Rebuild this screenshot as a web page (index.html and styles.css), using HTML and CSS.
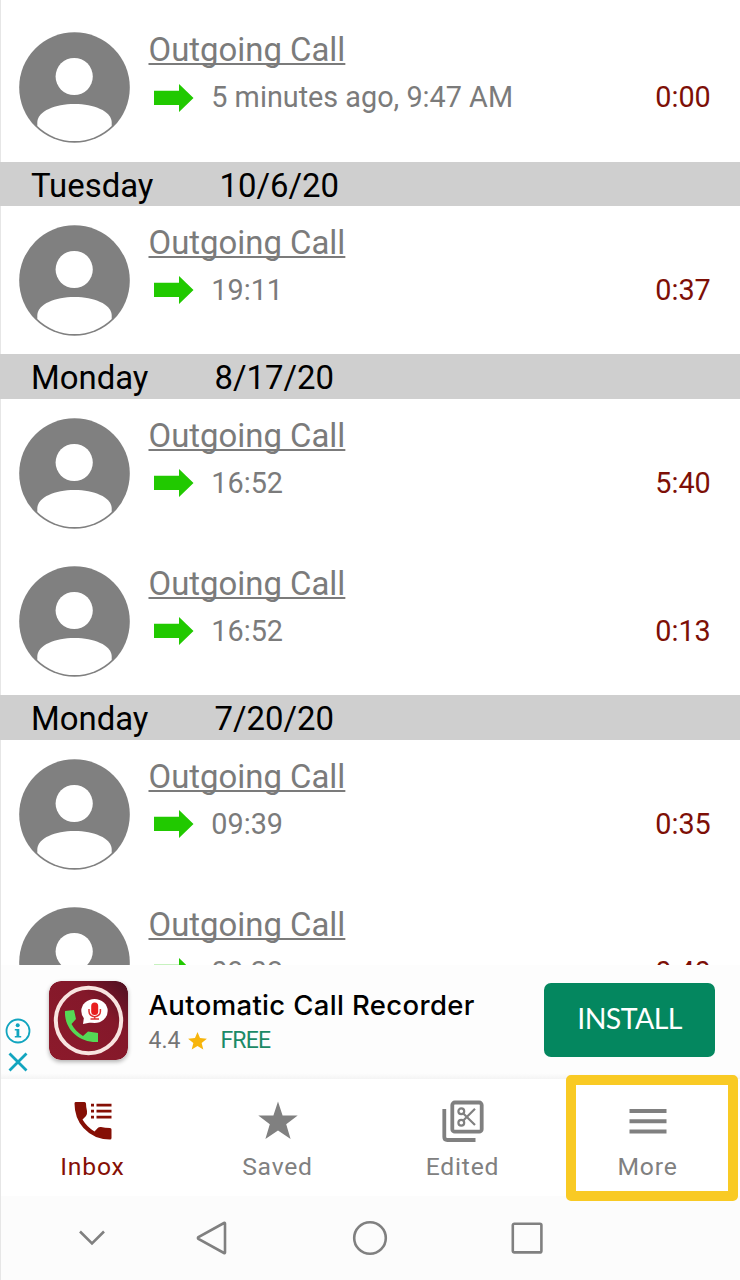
FILE: index.html
```html
<!DOCTYPE html>
<html lang="en">
<head>
    <meta charset="UTF-8">
    <meta name="viewport" content="width=device-width, initial-scale=1.0">
    <title>Call Recorder - Inbox</title>
    <link rel="stylesheet" href="styles.css">
</head>
<body>

<!-- Shared icons -->
<svg class="icon-defs" width="0" height="0">
    <symbol id="avatar" viewBox="0 0 111 111">
        <circle cx="55.5" cy="55.5" r="55.3" fill="#808080"/>
        <circle cx="55.2" cy="44.5" r="18.6" fill="#fff"/>
        <path d="M18.3 90C19 79 36 72 55.5 72S92 79 92.7 90V94A53.5 53.5 0 0 1 18.3 94Z" fill="#fff"/>
    </symbol>
    <symbol id="arrow" viewBox="0 0 40 28">
        <path d="M0 6.7H25V0L39.5 14L25 28V21H0Z" fill="#21c900"/>
    </symbol>
</svg>

<div class="screen">
    <div class="call-list">
        <div class="call">
            <svg class="avatar"><use href="#avatar"/></svg>
            <div class="call-info">
                <a class="call-name">Outgoing Call</a>
                <div class="call-line">
                    <svg class="arrow"><use href="#arrow"/></svg>
                    <span class="call-time">5 minutes ago, 9:47 AM</span>
                    <span class="duration">0:00</span>
                </div>
            </div>
        </div>

        <div class="date-header"><span>Tuesday</span><span>10/6/20</span></div>

        <div class="call">
            <svg class="avatar"><use href="#avatar"/></svg>
            <div class="call-info">
                <a class="call-name">Outgoing Call</a>
                <div class="call-line">
                    <svg class="arrow"><use href="#arrow"/></svg>
                    <span class="call-time">19:11</span>
                    <span class="duration">0:37</span>
                </div>
            </div>
        </div>

        <div class="date-header"><span>Monday</span><span>8/17/20</span></div>

        <div class="call">
            <svg class="avatar"><use href="#avatar"/></svg>
            <div class="call-info">
                <a class="call-name">Outgoing Call</a>
                <div class="call-line">
                    <svg class="arrow"><use href="#arrow"/></svg>
                    <span class="call-time">16:52</span>
                    <span class="duration">5:40</span>
                </div>
            </div>
        </div>
        <div class="call">
            <svg class="avatar"><use href="#avatar"/></svg>
            <div class="call-info">
                <a class="call-name">Outgoing Call</a>
                <div class="call-line">
                    <svg class="arrow"><use href="#arrow"/></svg>
                    <span class="call-time">16:52</span>
                    <span class="duration">0:13</span>
                </div>
            </div>
        </div>

        <div class="date-header"><span>Monday</span><span>7/20/20</span></div>

        <div class="call">
            <svg class="avatar"><use href="#avatar"/></svg>
            <div class="call-info">
                <a class="call-name">Outgoing Call</a>
                <div class="call-line">
                    <svg class="arrow"><use href="#arrow"/></svg>
                    <span class="call-time">09:39</span>
                    <span class="duration">0:35</span>
                </div>
            </div>
        </div>
        <div class="call">
            <svg class="avatar"><use href="#avatar"/></svg>
            <div class="call-info">
                <a class="call-name">Outgoing Call</a>
                <div class="call-line">
                    <svg class="arrow"><use href="#arrow"/></svg>
                    <span class="call-time">09:38</span>
                    <span class="duration">0:40</span>
                </div>
            </div>
        </div>
    </div>

    <!-- Ad banner -->
    <div class="ad">
        <div class="ad-choices">
            <svg width="26" height="26" viewBox="0 0 26 26">
                <circle cx="13" cy="13" r="11.5" fill="none" stroke="#12a5bf" stroke-width="1.8"/>
                <circle cx="12.7" cy="7.2" r="2" fill="#12a5bf"/>
                <path d="M9.8 11H14.3V18H16.2V19.6H9.8V18H11.5V12.6H9.8Z" fill="#12a5bf"/>
            </svg>
            <svg width="20" height="20" viewBox="0 0 20 20">
                <path d="M1.5 1.5L18.5 18.5M18.5 1.5L1.5 18.5" stroke="#12a5bf" stroke-width="2.8"/>
            </svg>
        </div>
        <svg class="ad-icon" viewBox="0 0 79 79">
            <defs>
                <linearGradient id="ad-bg" x1="0" y1="1" x2="1" y2="0">
                    <stop offset="0" stop-color="#8c1a2b"/>
                    <stop offset="0.65" stop-color="#84182a"/>
                    <stop offset="1" stop-color="#4d1021"/>
                </linearGradient>
            </defs>
            <rect width="79" height="79" rx="12" fill="url(#ad-bg)"/>
            <circle cx="39.5" cy="39.5" r="32.7" fill="none" stroke="#f8e4e0" stroke-width="4"/>
            <path d="M16 30L25 29L27 38L22.5 43C25 48 29 52 34 55L39 50.5L49 52V61C30 62 15 48 16 30Z" fill="#55d955"/>
            <ellipse cx="45.5" cy="30" rx="13.2" ry="12" fill="#fff"/>
            <path d="M35 36L34 43L44 41Z" fill="#fff"/>
            <rect x="42.2" y="21.5" width="7" height="12.5" rx="3.5" fill="#e81f1f"/>
            <path d="M40 28V30.5A5.7 5.2 0 0 0 51.4 30.5V28M45.7 35.5V38M41.5 38H50" fill="none" stroke="#e03232" stroke-width="1.5"/>
        </svg>
        <div class="ad-text">
            <div class="ad-title">Automatic Call Recorder</div>
            <div class="ad-meta">
                <span>4.4</span>
                <svg width="19" height="18" viewBox="0 0 24 23"><path d="M12 0L15.2 7.8L24 8.6L17.3 14.2L19.4 22.5L12 18L4.6 22.5L6.7 14.2L0 8.6L8.8 7.8Z" fill="#f7b50c"/></svg>
                <span class="free">FREE</span>
            </div>
        </div>
        <button class="install">INSTALL</button>
    </div>

    <div class="tabs">
        <div class="tab active">
            <svg width="40" height="42" viewBox="0 0 40 42">
                <path d="M2.500 2H11.500Q12.800 2 13 3.500Q13 7 14 11Q14.400 14 13 16L9.500 19.500Q14 27 21.500 31.500L25 27.800Q26 26.800 28 27Q32 28 37 28Q38.500 28 38.500 29.500V38Q38.500 39.500 37 39.500Q21 39.500 10.500 28Q1.500 18 1.500 3.500Q1.500 2 2.500 2Z" fill="#850f05"/>
                <path d="M18 5.200H21M23.500 5.200H38.500M18 11.200H21M23.500 11.200H38.500M18 17.200H21M23.500 17.200H38.500" stroke="#850f05" stroke-width="2.800"/>
            </svg>
            <span>Inbox</span>
        </div>
        <div class="tab">
            <svg width="40" height="42" viewBox="0 0 40 42">
                <path d="M20 1.500L24.600 15.500H39.700L28.200 24.300L32.600 39L20 30.500L7.400 39L11.800 24.300L0.300 15.500H15.400Z" fill="#808080"/>
            </svg>
            <span>Saved</span>
        </div>
        <div class="tab">
            <svg width="42" height="42" viewBox="0 0 42 42">
                <g fill="none" stroke="#808080">
                    <rect x="10.300" y="2.500" width="29.400" height="29.200" rx="2.500" stroke-width="3.800"/>
                    <path d="M2.300 9V37Q2.300 40 5.300 40H33.500" stroke-width="3.800"/>
                    <g stroke-width="2.200">
                        <circle cx="19.300" cy="11.300" r="2.900"/>
                        <circle cx="19.300" cy="22.800" r="2.900"/>
                        <path d="M21.300 13.500L33 25M21.300 20.600L33 8.800"/>
                    </g>
                </g>
            </svg>
            <span>Edited</span>
        </div>
        <div class="tab highlighted">
            <svg width="40" height="42" viewBox="0 0 40 42">
                <path d="M1.500 11H38.500M1.500 21.300H38.500M1.500 31.500H38.500" stroke="#808080" stroke-width="4"/>
            </svg>
            <span>More</span>
        </div>
    </div>

    <!-- Android navigation bar -->
    <div class="system-bar">
        <svg width="28" height="34" viewBox="0 0 28 34"><path d="M2 10.500L14 22.500L26 10.500" /></svg>
        <svg width="34" height="36" viewBox="0 0 34 36"><path d="M30 3.500V32.500Q30 33.500 29 33L3.500 19Q2.500 18 3.500 17L29 3Q30 2.500 30 3.500Z"/></svg>
        <svg width="36" height="36" viewBox="0 0 36 36"><circle cx="18" cy="18" r="15.800"/></svg>
        <svg width="34" height="34" viewBox="0 0 34 34"><rect x="2.800" y="2.800" width="28.600" height="28.600" rx="1.500"/></svg>
    </div>
</div>

</body>
</html>
```
FILE: styles.css
```css
body {
    margin: 0;
    font-family: Roboto, "Liberation Sans", sans-serif;
    background-color: white;
}

.icon-defs {
    display: none;
}

.screen {
    width: 740px;
    height: 1280px;
    display: flex;
    flex-direction: column;
    overflow: hidden;
    box-shadow: inset 1px 0 #e6e6e6;
}

.call-list {
    height: 951.7px;
    padding-top: 13.3px;
    overflow: hidden;
    flex: none;
}

.call {
    display: flex;
    height: 148.3px;
    padding: 19px 29.2px 0 18.5px;
    box-sizing: border-box;
}

.avatar {
    width: 111px;
    height: 111px;
    flex: none;
}

.call-info {
    flex: 1;
    margin-left: 19px;
    color: #7b7b7b;
}

.call-name {
    display: block;
    width: max-content;
    font-size: 32.9px;
    line-height: 36px;
    text-decoration: underline;
    text-decoration-thickness: 2px;
    text-underline-offset: 2px;
    text-decoration-skip-ink: none;
}

.call-line {
    display: flex;
    align-items: center;
    height: 34px;
    margin-top: 12px;
    font-size: 28.8px;
}

.arrow {
    width: 40px;
    height: 28px;
    margin: 1px 17.8px 0 5px;
}

.duration {
    margin-left: auto;
    color: #7d0f07;
}

.date-header {
    display: flex;
    gap: 66px;
    height: 44.4px;
    line-height: 48px;
    padding-left: 31px;
    background-color: #cfcfcf;
    color: #000;
    font-size: 32.9px;
}

.ad {
    display: flex;
    height: 114.5px;
    background: linear-gradient(#fdfdfd 95%, #f4f4f4);
    box-shadow: inset 1px 0 #e6e6e6;
    flex: none;
}

.ad-choices {
    display: flex;
    flex-direction: column;
    align-items: center;
    gap: 8px;
    width: 26px;
    padding: 53.5px 0 0 4.5px;
}

.ad-icon {
    width: 79px;
    height: 79px;
    margin: 16px 0 0 18.5px;
    border-radius: 12px;
    box-shadow: 0 2px 4px rgba(0, 0, 0, 0.3);
}

.ad-text {
    margin: 22px 0 0 20.5px;
}

.ad-title {
    font-family: Inter, sans-serif;
    font-weight: 500;
    font-size: 27.5px;
    letter-spacing: 0.35px;
    line-height: 36px;
    color: #000;
    white-space: nowrap;
}

.ad-meta {
    display: flex;
    align-items: center;
    margin-top: 2px;
    font-size: 23px;
    line-height: 32px;
    color: #757575;
}

.ad-meta svg {
    margin: 0 13px 0 8px;
}

.free {
    color: #1b8a66;
    letter-spacing: -0.8px;
}

.install {
    width: 171px;
    height: 74px;
    margin: 18px 25px 0 auto;
    padding: 0 0 4px;
    border: none;
    border-radius: 7px;
    background-color: #04875f;
    color: white;
    font-family: Lato, sans-serif;
    font-size: 28.5px;
    letter-spacing: -0.6px;
}

.tabs {
    display: flex;
    height: 116.5px;
    background-color: white;
    box-shadow: inset 1px 0 #e6e6e6;
    flex: none;
}

.tab {
    position: relative;
    display: flex;
    flex: 1;
    flex-direction: column;
    align-items: center;
    padding-top: 21px;
    color: #808080;
    font-size: 24.7px;
    line-height: 30px;
    letter-spacing: 0.8px;
}

.tab span {
    margin-top: 9.5px;
}

.tab.active {
    color: #850f05;
}

/* Yellow frame drawn over the last tab */
.highlighted::after {
    content: "";
    position: absolute;
    left: 11px;
    top: -4.5px;
    width: 152px;
    height: 106px;
    border: 10px solid #f9ca24;
    border-radius: 5px;
}

.system-bar {
    display: flex;
    align-items: center;
    flex: 1;
    padding-left: 78px;
    background-color: #fcfcfc;
    box-shadow: inset 1px 0 #e6e6e6;
}

.system-bar svg {
    fill: none;
    stroke: #808080;
    stroke-width: 2.6;
}

.system-bar svg:nth-child(2) {
    margin-left: 89px;
}

.system-bar svg:nth-child(3) {
    margin-left: 123px;
}

.system-bar svg:nth-child(4) {
    margin-left: 122px;
}
```
